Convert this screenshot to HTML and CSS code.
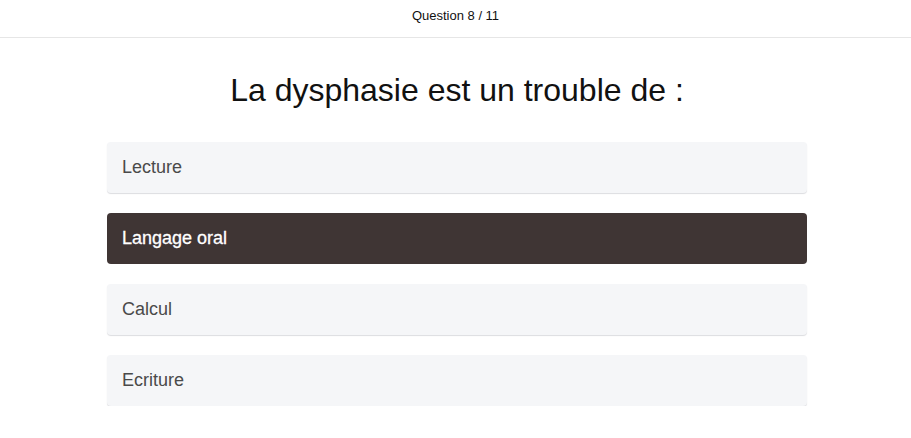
FILE: index.html
```html
<!DOCTYPE html>
<html lang="fr">
<head>
<meta charset="utf-8">
<title>Quiz</title>
<link rel="stylesheet" href="styles.css">
</head>
<body>
<header class="topbar">Question 8 / 11</header>
<main class="quiz">
  <h1 class="question">La dysphasie est un trouble de :</h1>
  <ul class="answers">
    <li class="answer">Lecture</li>
    <li class="answer selected">Langage oral</li>
    <li class="answer">Calcul</li>
    <li class="answer">Ecriture</li>
  </ul>
</main>
</body>
</html>
```

FILE: styles.css
```css
* { box-sizing: border-box; }
html, body {
  margin: 0;
  padding: 0;
  background: #ffffff;
  font-family: "Liberation Sans", Arial, sans-serif;
  color: #111;
}
.topbar {
  height: 38px;
  border-bottom: 1px solid #e6e6e6;
  display: flex;
  align-items: center;
  justify-content: center;
  font-size: 13px;
  color: #111;
  padding-bottom: 6px;
}
.quiz {
  width: 703px;
  margin: 0 auto;
  padding-left: 3px;
}
.question {
  margin: 34px 0 0;
  text-align: center;
  font-weight: normal;
  font-size: 32px;
  line-height: 37px;
  color: #111;
}
.answers {
  list-style: none;
  margin: 33px 0 0;
  padding: 0;
  display: flex;
  flex-direction: column;
  gap: 20px;
}
.answer {
  height: 51px;
  display: flex;
  align-items: center;
  padding: 0 15px;
  background: #f5f6f8;
  border-radius: 4px;
  box-shadow: 0 1px 1px #dcdde0;
  font-size: 18px;
  color: #4a4a4a;
}
.answer.selected {
  background: #3f3534;
  color: #fff;
  box-shadow: none;
  -webkit-text-stroke: 0.3px #fff;
}
```
